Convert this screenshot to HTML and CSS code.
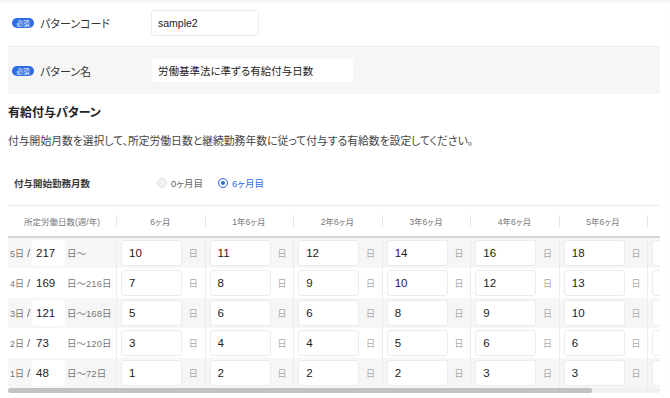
FILE: index.html
```html
<!DOCTYPE html>
<html lang="ja">
<head>
    <meta charset="UTF-8">
    <meta name="viewport" content="width=device-width, initial-scale=1.0">
    <title>有給付与パターン</title>
    <link rel="stylesheet" href="styles.css">
</head>
<body>
<div class="page">
    <div class="form-row">
        <div class="form-label"><span class="badge">必須</span>パターンコード</div>
        <input class="text-input code-input" value="sample2">
    </div>
    <div class="form-row is-gray">
        <div class="form-label"><span class="badge">必須</span>パターン名</div>
        <input class="text-input name-input" value="労働基準法に準ずる有給付与日数">
    </div>

    <h2 class="section-title">有給付与パターン</h2>
    <p class="section-desc">付与開始月数を選択して、所定労働日数と継続勤務年数に従って付与する有給数を設定してください。</p>

    <div class="radio-row">
        <div class="radio-title">付与開始勤務月数</div>
        <label class="radio is-disabled"><span class="radio-dot"></span>0ヶ月目</label>
        <label class="radio is-checked"><span class="radio-dot"></span>6ヶ月目</label>
    </div>

    <div class="table-wrap">
        <table class="grant-table">
            <thead>
                <tr>
                    <th class="col-days">所定労働日数(週/年)</th>
                    <th>6ヶ月</th>
                    <th>1年6ヶ月</th>
                    <th>2年6ヶ月</th>
                    <th>3年6ヶ月</th>
                    <th>4年6ヶ月</th>
                    <th>5年6ヶ月</th>
                    <th>6年6ヶ月</th>
                </tr>
            </thead>
            <tbody class="js-rows"></tbody>
        </table>
    </div>
    <div class="scroll-track"><div class="scroll-thumb"></div></div>
</div>

<script>
    const rows = [
        { week: 5, from: 217, to: '', grants: [10, 11, 12, 14, 16, 18, 20] },
        { week: 4, from: 169, to: '216日', grants: [7, 8, 9, 10, 12, 13, 15] },
        { week: 3, from: 121, to: '168日', grants: [5, 6, 6, 8, 9, 10, 11] },
        { week: 2, from: 73, to: '120日', grants: [3, 4, 4, 5, 6, 6, 7] },
        { week: 1, from: 48, to: '72日', grants: [1, 2, 2, 2, 3, 3, 3] }
    ];

    let html = '';
    rows.forEach(function(row) {
        html += '<tr>';
        html += `<td class="col-days"><div class="days-cell"><span class="week">${row.week}日</span><span class="slash">/</span><input class="num-input days-input" value="${row.from}"><span class="range">日〜${row.to}</span></div></td>`;
        row.grants.forEach(function(value) {
            html += `<td><div class="grant-cell"><input class="num-input" value="${value}"><span class="unit">日</span></div></td>`;
        });
        html += '</tr>';
    });
    document.querySelector('.js-rows').innerHTML = html;
</script>
</body>
</html>
```

FILE: styles.css
```css
body {
    margin: 0;
    background-color: white;
    color: #333;
    font-family: "Liberation Sans", "Noto Sans CJK JP", sans-serif;
    font-feature-settings: "palt";
}

.page {
    padding: 0 10px 0 8px;
    box-shadow: inset 0 4px 4px -3px rgba(0, 0, 0, 0.08);
}

.form-row {
    display: flex;
    align-items: center;
    height: 46px;
}

.form-row.is-gray {
    height: 47px;
    background-color: #f6f6f6;
    border-top: 1px solid #ececec;
}

.form-label {
    display: flex;
    align-items: center;
    width: 139px;
    padding-left: 4px;
    font-size: 11px;
    color: #333;
}

.badge {
    display: inline-flex;
    align-items: center;
    justify-content: center;
    width: 22px;
    height: 10px;
    margin-right: 6px;
    border-radius: 5px;
    background-color: #2f6de5;
    color: white;
    font-size: 6.5px;
    font-family: "Noto Sans CJK JP", sans-serif;
}

.text-input {
    box-sizing: border-box;
    height: 26px;
    padding: 0 6px;
    border: 1px solid #ececec;
    border-radius: 3px;
    background-color: white;
    color: #222;
    font-family: "Liberation Sans", "Noto Sans CJK JP", sans-serif;
    font-size: 10.5px;
    font-feature-settings: "palt";
    outline: none;
}

.code-input {
    width: 108px;
}

.name-input {
    width: 203px;
    height: 25px;
    border-color: #f6f6f6;
}

.section-title {
    margin: 10px 0 0;
    font-size: 12px;
    line-height: 18px;
    font-weight: bold;
    color: #222;
}

.section-desc {
    margin: 11px 0 0;
    font-size: 10.8px;
    line-height: 16px;
    color: #444;
}

.radio-row {
    display: flex;
    align-items: center;
    height: 30px;
    margin-top: 19px;
}

.radio-title {
    width: 143px;
    padding-left: 6px;
    font-size: 9.5px;
    font-weight: bold;
    color: #3a3a3a;
}

.radio {
    display: flex;
    align-items: center;
    gap: 4px;
    margin-right: 15px;
    font-size: 9.5px;
    color: #666;
}

.radio-dot {
    box-sizing: border-box;
    width: 10px;
    height: 10px;
    border-radius: 50%;
    border: 1px solid #e2e2e2;
    background-color: #f2f2f2;
}

.radio.is-checked {
    color: #2f6de5;
}

.radio.is-checked .radio-dot {
    border: 1.5px solid #2f6de5;
    background-color: white;
    box-shadow: inset 0 0 0 2px white, inset 0 0 0 5px #2f6de5;
}

.table-wrap {
    margin-top: 7px;
    overflow: hidden;
    border-top: 1px solid #ececec;
}

.scroll-track {
    height: 5px;
    border-radius: 3px;
    background-color: #f1f1f1;
}

.scroll-thumb {
    width: 584px;
    height: 5px;
    border-radius: 3px;
    background-color: #c2c2c2;
}

.grant-table {
    width: 728px;
    table-layout: fixed;
    border-collapse: separate;
    border-spacing: 0;
}

.grant-table th {
    width: 88.5px;
    height: 30px;
    padding: 0;
    border-bottom: 2px solid #d6d6d6;
    font-size: 8.5px;
    font-weight: normal;
    color: #777;
    background: linear-gradient(#e6e6e6, #e6e6e6) left center / 1px 12px no-repeat;
}

.grant-table th.col-days {
    width: 108px;
    background: none;
}

.grant-table td {
    height: 30px;
    padding: 0 0 0 4px;
    box-sizing: border-box;
    border-left: 1px solid #ececec;
}

.grant-table td.col-days {
    padding-left: 2px;
    border-left: none;
}

.grant-table tbody tr:nth-child(odd) td {
    background-color: #f6f6f6;
}

.num-input {
    box-sizing: border-box;
    width: 61px;
    height: 26px;
    padding: 0 7px;
    border: 1px solid #ececec;
    border-radius: 3px;
    background-color: white;
    color: #222;
    font-family: "Liberation Sans", sans-serif;
    font-size: 11.5px;
    outline: none;
}

.grant-cell {
    display: flex;
    align-items: center;
}

.unit {
    flex: 1;
    text-align: center;
    font-size: 9px;
    color: #aaa;
}

.days-cell {
    display: flex;
    align-items: center;
    font-size: 9px;
    color: #777;
}

.slash {
    margin: 0 2px 0 3px;
    font-size: 11px;
    color: #666;
}

.days-input {
    width: 33px;
    padding: 0 3px;
    border-color: white;
}

.range {
    margin-left: 2px;
    font-size: 9.5px;
    color: #777;
}
```
